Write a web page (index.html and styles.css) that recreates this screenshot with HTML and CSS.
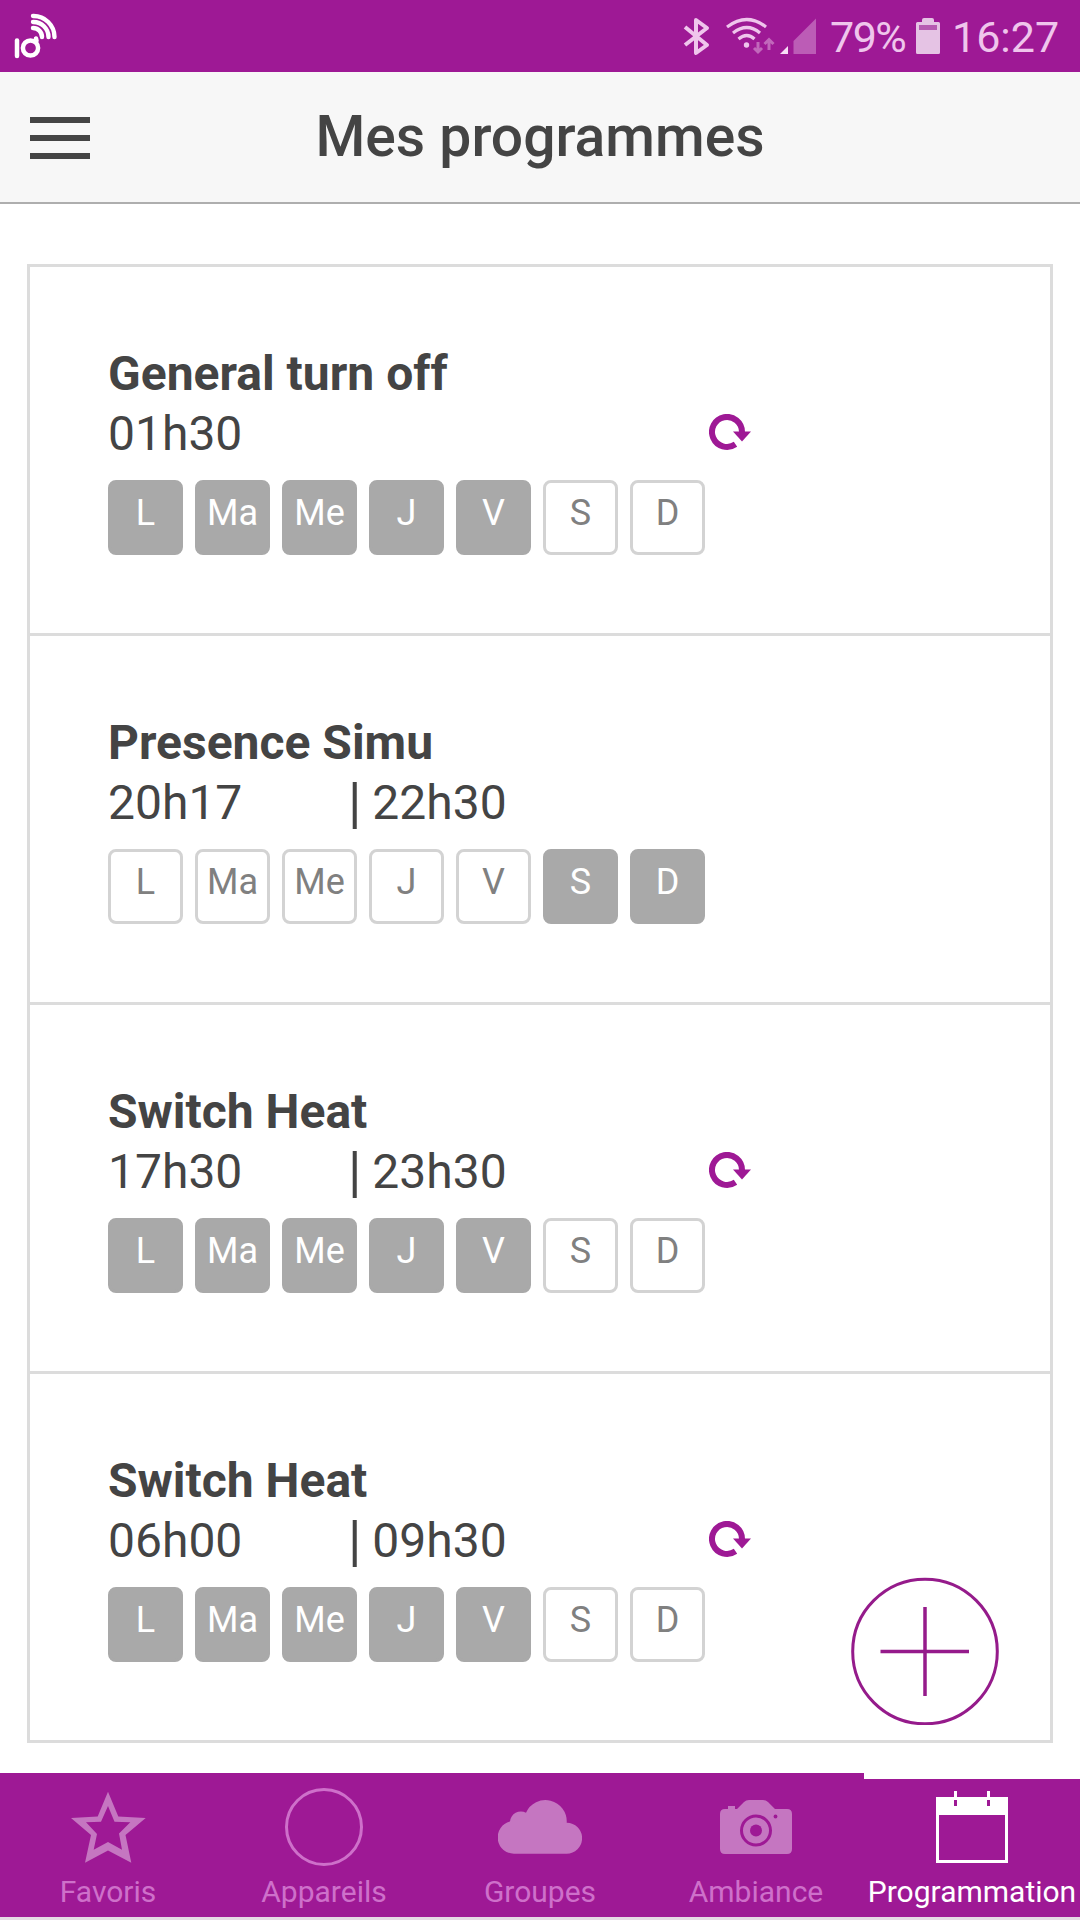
FILE: index.html
```
<!DOCTYPE html>
<html lang="fr">
<head>
    <meta charset="UTF-8">
    <title>Mes programmes</title>
    <link rel="stylesheet" href="styles.css">
</head>
<body>
<div class="status">
    <svg class="logo" width="44" height="46" viewBox="0 0 44 46" fill="none" stroke="#fff" stroke-linecap="round">
        <path d="M4 27.500v15.500" stroke-width="4.500"/>
        <circle cx="17.500" cy="35" r="7.600" stroke-width="4.500"/>
        <path d="M23.500 28l-.5-2.500" stroke-width="4.500"/>
        <path d="M20 15a9 9 0 0 1 9 9M20 9a15 15 0 0 1 15.500 15M20 3a21 21 0 0 1 21.500 21" stroke-width="4.400"/>
    </svg>
    <div class="status-right">
        <svg width="136" height="40" viewBox="0 0 136 40">
            <path d="M2 10L24 28L13 36V3L24 11L2 28" fill="none" stroke="#efc5ec" stroke-width="4" stroke-linejoin="round"/>
            <g fill="none" stroke="#efc5ec" stroke-width="3.200">
                <path d="M44 10Q64-5 83 10M50 16Q64 5 77 16M55.500 22Q64 15 71.500 22"/>
            </g>
            <circle cx="63.500" cy="28" r="2.700" fill="#efc5ec"/>
            <path d="M75 25v10M71 31l4 4 4-4M86 33V22M81.500 27l4.500-4.500 4.500 4.500" fill="none" stroke="#c168bb" stroke-width="3"/>
            <path d="M97 37l8-8v8z" fill="#f7def5"/>
            <path d="M133 1.500V37h-22.500V24z" fill="#bc5cb6"/>
        </svg>
        <span class="percent">79%</span>
        <svg class="battery" width="24" height="36" viewBox="0 0 24 36">
            <path d="M8 0h8a2 2 0 0 1 2 2v2h4.500a1.500 1.500 0 0 1 1.500 1.500v29a1.500 1.500 0 0 1-1.500 1.500h-21a1.500 1.500 0 0 1-1.500-1.500v-29a1.500 1.500 0 0 1 1.500-1.500h4.500v-2a2 2 0 0 1 2-2z" fill="#e5c3e4"/>
            <path d="M3 7h18v5H3z" fill="#b65bb1"/>
        </svg>
        <span class="clock">16:27</span>
    </div>
</div>

<div class="header">
    <div class="menu"><i></i><i></i><i></i></div>
    <h1>Mes programmes</h1>
</div>

<div class="content">
    <ul class="programs">
        <li>
            <h2>General turn off</h2>
            <div class="time">
                <span class="start">01h30</span>
                <svg class="repeat" viewBox="0 0 42 37"><use href="#repeat"/></svg>
            </div>
            <div class="days"><b class="on">L</b><b class="on">Ma</b><b class="on">Me</b><b class="on">J</b><b class="on">V</b><b>S</b><b>D</b></div>
        </li>
        <li>
            <h2>Presence Simu</h2>
            <div class="time">
                <span class="start">20h17</span><span class="end"><i>|</i> 22h30</span>
            </div>
            <div class="days"><b>L</b><b>Ma</b><b>Me</b><b>J</b><b>V</b><b class="on">S</b><b class="on">D</b></div>
        </li>
        <li>
            <h2>Switch Heat</h2>
            <div class="time">
                <span class="start">17h30</span><span class="end"><i>|</i> 23h30</span>
                <svg class="repeat" viewBox="0 0 42 37"><use href="#repeat"/></svg>
            </div>
            <div class="days"><b class="on">L</b><b class="on">Ma</b><b class="on">Me</b><b class="on">J</b><b class="on">V</b><b>S</b><b>D</b></div>
        </li>
        <li>
            <h2>Switch Heat</h2>
            <div class="time">
                <span class="start">06h00</span><span class="end"><i>|</i> 09h30</span>
                <svg class="repeat" viewBox="0 0 42 37"><use href="#repeat"/></svg>
            </div>
            <div class="days"><b class="on">L</b><b class="on">Ma</b><b class="on">Me</b><b class="on">J</b><b class="on">V</b><b>S</b><b>D</b></div>
        </li>
    </ul>
</div>

<div class="add">
    <svg width="148" height="148" viewBox="0 0 148 148" fill="none" stroke="#951b8b">
        <circle cx="74" cy="74.500" r="72.300" stroke-width="3"/>
        <path d="M74 30v89M29.500 74.500h88.500" stroke-width="3.500"/>
    </svg>
</div>

<div class="tabs">
    <div class="tab">
        <svg width="84" height="84" viewBox="0 0 84 84">
            <path d="M42 6.700L52.300 31.500L79.700 33L59.500 50L65.300 77.700L42 65.500L19 77.700L25 50L5 33L31.700 31.500ZM42 21L35 36.700L20 37.300L31 49L27.700 64.700L42 57L56 64.700L53 48.500L64.300 37.300L48.500 36.700Z" fill="#c576c1" fill-rule="evenodd"/>
        </svg>
        <span>Favoris</span>
    </div>
    <div class="tab">
        <svg width="84" height="84" viewBox="0 0 84 84">
            <circle cx="42" cy="42" r="37.500" fill="none" stroke="#ce70ca" stroke-width="3"/>
        </svg>
        <span>Appareils</span>
    </div>
    <div class="tab">
        <svg width="84" height="84" viewBox="0 0 84 84">
            <path d="M16.500 68.700A16.300 16.300 0 0 1 12 36.600A11 11 0 0 1 28 27.700A21.300 21.300 0 0 1 68.700 37.700A15.500 15.500 0 0 1 68.500 68.700Z" fill="#c576c1"/>
        </svg>
        <span>Groupes</span>
    </div>
    <div class="tab">
        <svg width="84" height="84" viewBox="0 0 84 84">
            <path d="M11 24h3v-3h7v3h2l7-7q2-2 5-2h14q3 0 5 2l7 7h12q5 0 5 5v35q0 5-5 5H11q-5 0-5-5V29q0-5 5-5z" fill="#c576c1"/>
            <circle cx="42" cy="45.500" r="14.500" fill="none" stroke="#9e1995" stroke-width="3"/>
            <circle cx="42" cy="45.500" r="6" fill="#9e1995"/>
            <circle cx="61.500" cy="31.500" r="1.900" fill="#9e1995"/>
        </svg>
        <span>Ambiance</span>
    </div>
    <div class="tab active">
        <svg width="84" height="84" viewBox="0 0 84 84">
            <path d="M6 12h18V6h3v6h30V6h3v6h18v66H6zM9 30v45h66V30zM24 15v6h3v-6zM57 15v6h3v-6z" fill="#fff" fill-rule="evenodd"/>
        </svg>
        <span>Programmation</span>
    </div>
</div>

<svg class="defs">
    <symbol id="repeat" viewBox="0 0 42 37">
        <path d="M26.500 30.300A15 15 0 1 1 33 18" fill="none" stroke="#9e1995" stroke-width="6"/>
        <path d="M24 17.500h18L33 27.500z" fill="#9e1995"/>
    </symbol>
</svg>
</body>
</html>
```

FILE: styles.css
```
* {
    margin: 0;
    padding: 0;
    box-sizing: border-box;
    list-style: none;
}

body {
    width: 1080px;
    height: 1920px;
    overflow: hidden;
    position: relative;
    display: flex;
    flex-direction: column;
    background: #fff;
    color: #444;
    font-family: Roboto, "Liberation Sans", sans-serif;
}

svg {
    display: block;
    flex: none;
}

.defs {
    position: absolute;
    width: 0;
    height: 0;
}

.status {
    height: 72px;
    background: #9e1995;
    display: flex;
    justify-content: space-between;
    padding: 13px 20px 0 13px;
}

.status-right {
    display: flex;
    padding-top: 4px;
    color: #efc5ec;
    font-size: 43px;
    line-height: 40px;
}

.percent {
    width: 76px;
    margin: 0 10px 0 11px;
    letter-spacing: -1.5px;
}

.battery {
    margin-top: 1px;
}

.clock {
    width: 108px;
    margin-left: 12px;
}

.header {
    height: 132px;
    background: #f7f7f7;
    border-bottom: 2px solid #aeaeae;
    display: flex;
    align-items: center;
    padding: 0 30px;
}

.header h1 {
    flex: 1;
    margin-right: 60px;
    text-align: center;
    font-size: 57px;
    font-weight: 500;
    line-height: 66px;
}

.menu {
    width: 60px;
    padding-top: 2px;
}

.menu i {
    display: block;
    height: 6px;
    background: #444;
    margin-bottom: 12px;
}

.menu i:last-child {
    margin-bottom: 0;
}

.content {
    flex: 1;
    padding: 60px 27px 0;
}

.programs {
    border: 3px solid #dcdcdc;
}

.programs li {
    height: 369px;
    padding: 77px 78px 0;
    border-bottom: 3px solid #dcdcdc;
}

.programs li:last-child {
    height: 366px;
    border-bottom: 0;
}

.programs h2 {
    font-size: 48px;
    font-weight: bold;
    line-height: 60px;
}

.time {
    height: 60px;
    line-height: 60px;
    font-size: 48px;
    display: flex;
}

.start {
    width: 240px;
}

.end {
    width: 220px;
}

.end i {
    margin-right: -1px;
    font-size: 55px;
    font-style: normal;
    line-height: 0;
    vertical-align: -3px;
}

.repeat {
    width: 42px;
    height: 37px;
    margin: 10px 221px 0 auto;
}

.days {
    display: flex;
    gap: 12px;
    padding-top: 16px;
}

.days b {
    width: 75px;
    height: 75px;
    border: 3px solid #d3d3d3;
    border-radius: 8px;
    color: #808080;
    font-size: 36px;
    font-weight: normal;
    line-height: 60px;
    text-align: center;
}

.days .on {
    background: #a9a9a9;
    border-color: #a9a9a9;
    color: #fff;
}

.add {
    position: absolute;
    left: 851px;
    top: 1577px;
}

.tabs {
    height: 147px;
    background: #9e1995;
    border-bottom: 3px solid #e6d9e5;
    display: flex;
}

.tab {
    width: 216px;
    display: flex;
    flex-direction: column;
    align-items: center;
    padding-top: 12px;
    color: #ce70ca;
    font-size: 30px;
    line-height: 46px;
}

.active {
    border-top: 6px solid #fff;
    padding-top: 6px;
    color: #fff;
}
```
